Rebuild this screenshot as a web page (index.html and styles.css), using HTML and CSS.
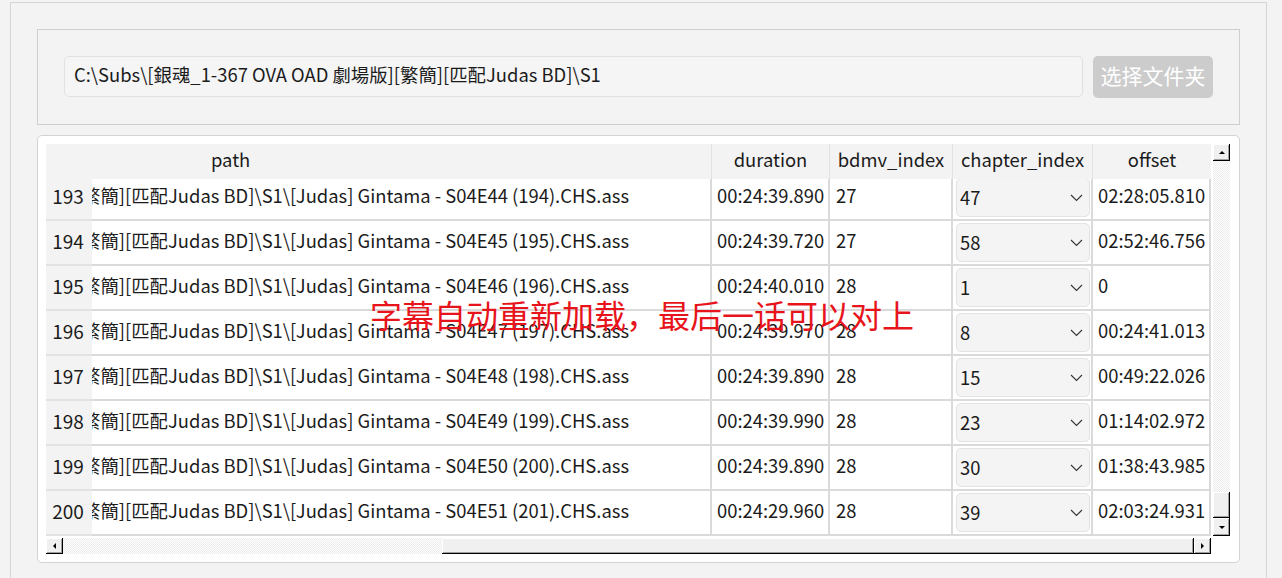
FILE: index.html
```html
<!DOCTYPE html>
<html lang="zh">
<head>
<meta charset="utf-8">
<title>Subs</title>
<link rel="stylesheet" href="styles.css">
</head>
<body>
<div class="window">
  <div class="group">
    <div class="lineedit">C:\Subs\[銀魂_1-367 OVA OAD 劇場版][繁簡][匹配Judas BD]\S1</div>
    <button class="btn">选择文件夹</button>
  </div>
  <div class="tableframe">
    <div class="view">
      <div class="header">
        <div class="hcell corner"></div>
        <div class="hcell w-path h-path">path</div>
        <div class="hcell w-dur">duration</div>
        <div class="hcell w-bdmv">bdmv_index</div>
        <div class="hcell w-chap">chapter_index</div>
        <div class="hcell w-off">offset</div>
      </div>
      <div class="body">
        <div class="rows">
          <div class="row"><div class="cell rn">193</div><div class="cell w-path path"><span>繁簡][匹配Judas BD]\S1\[Judas] Gintama - S04E44 (194).CHS.ass</span></div><div class="cell w-dur">00:24:39.890</div><div class="cell w-bdmv">27</div><div class="cell w-chap chap"><div class="combo"><span>47</span><svg class="chev" width="13" height="8" viewBox="0 0 13 8"><polyline points="1,1 6.5,6.5 12,1"/></svg></div></div><div class="cell w-off">02:28:05.810</div></div>
          <div class="row"><div class="cell rn">194</div><div class="cell w-path path"><span>繁簡][匹配Judas BD]\S1\[Judas] Gintama - S04E45 (195).CHS.ass</span></div><div class="cell w-dur">00:24:39.720</div><div class="cell w-bdmv">27</div><div class="cell w-chap chap"><div class="combo"><span>58</span><svg class="chev" width="13" height="8" viewBox="0 0 13 8"><polyline points="1,1 6.5,6.5 12,1"/></svg></div></div><div class="cell w-off">02:52:46.756</div></div>
          <div class="row"><div class="cell rn">195</div><div class="cell w-path path"><span>繁簡][匹配Judas BD]\S1\[Judas] Gintama - S04E46 (196).CHS.ass</span></div><div class="cell w-dur">00:24:40.010</div><div class="cell w-bdmv">28</div><div class="cell w-chap chap"><div class="combo"><span>1</span><svg class="chev" width="13" height="8" viewBox="0 0 13 8"><polyline points="1,1 6.5,6.5 12,1"/></svg></div></div><div class="cell w-off">0</div></div>
          <div class="row"><div class="cell rn">196</div><div class="cell w-path path"><span>繁簡][匹配Judas BD]\S1\[Judas] Gintama - S04E47 (197).CHS.ass</span></div><div class="cell w-dur">00:24:39.970</div><div class="cell w-bdmv">28</div><div class="cell w-chap chap"><div class="combo"><span>8</span><svg class="chev" width="13" height="8" viewBox="0 0 13 8"><polyline points="1,1 6.5,6.5 12,1"/></svg></div></div><div class="cell w-off">00:24:41.013</div></div>
          <div class="row"><div class="cell rn">197</div><div class="cell w-path path"><span>繁簡][匹配Judas BD]\S1\[Judas] Gintama - S04E48 (198).CHS.ass</span></div><div class="cell w-dur">00:24:39.890</div><div class="cell w-bdmv">28</div><div class="cell w-chap chap"><div class="combo"><span>15</span><svg class="chev" width="13" height="8" viewBox="0 0 13 8"><polyline points="1,1 6.5,6.5 12,1"/></svg></div></div><div class="cell w-off">00:49:22.026</div></div>
          <div class="row"><div class="cell rn">198</div><div class="cell w-path path"><span>繁簡][匹配Judas BD]\S1\[Judas] Gintama - S04E49 (199).CHS.ass</span></div><div class="cell w-dur">00:24:39.990</div><div class="cell w-bdmv">28</div><div class="cell w-chap chap"><div class="combo"><span>23</span><svg class="chev" width="13" height="8" viewBox="0 0 13 8"><polyline points="1,1 6.5,6.5 12,1"/></svg></div></div><div class="cell w-off">01:14:02.972</div></div>
          <div class="row"><div class="cell rn">199</div><div class="cell w-path path"><span>繁簡][匹配Judas BD]\S1\[Judas] Gintama - S04E50 (200).CHS.ass</span></div><div class="cell w-dur">00:24:39.890</div><div class="cell w-bdmv">28</div><div class="cell w-chap chap"><div class="combo"><span>30</span><svg class="chev" width="13" height="8" viewBox="0 0 13 8"><polyline points="1,1 6.5,6.5 12,1"/></svg></div></div><div class="cell w-off">01:38:43.985</div></div>
          <div class="row"><div class="cell rn">200</div><div class="cell w-path path"><span>繁簡][匹配Judas BD]\S1\[Judas] Gintama - S04E51 (201).CHS.ass</span></div><div class="cell w-dur">00:24:29.960</div><div class="cell w-bdmv">28</div><div class="cell w-chap chap"><div class="combo"><span>39</span><svg class="chev" width="13" height="8" viewBox="0 0 13 8"><polyline points="1,1 6.5,6.5 12,1"/></svg></div></div><div class="cell w-off">02:03:24.931</div></div>
        </div>
      </div>
      <div class="hscroll">
        <div class="sbtn hbtn"><i class="arr arr-left"></i></div>
        <div class="track htrack"></div>
        <div class="sbtn hthumb"></div>
        <div class="sbtn hbtn"><i class="arr arr-right"></i></div>
      </div>
    </div>
    <div class="vscroll">
      <div class="sbtn vbtn-up"><i class="arr arr-up"></i></div>
      <div class="track vtrack"></div>
      <div class="sbtn vthumb"></div>
      <div class="sbtn vbtn-down"><i class="arr arr-down"></i></div>
    </div>
    <div class="note">字幕自动重新加载，最后一话可以对上</div>
  </div>
</div>
</body>
</html>
```

FILE: styles.css
```css
html, body {
  margin: 0;
  height: 100%;
  overflow: hidden;
  background: #f3f3f3;
  font-family: "Noto Sans CJK SC", "Noto Sans", sans-serif;
  color: #1b1b1b;
}

.window {
  margin: 2px 0 0 10px;
  width: 1257px;
  height: 576px;
  box-sizing: border-box;
  border: 1px solid #d6d6d6;
  border-bottom: none;
  padding: 26px 26px 0 26px;
}

.group {
  height: 96px;
  box-sizing: border-box;
  border: 1px solid #cfcfcf;
  display: flex;
  align-items: flex-start;
  gap: 10px;
  padding: 26px 26px 0 26px;
}

.lineedit {
  flex: 1;
  height: 41px;
  box-sizing: border-box;
  border: 1px solid #e1e1e1;
  border-radius: 5px;
  background: #f5f5f5;
  font-size: 18.4px;
  line-height: 35px;
  padding-left: 9px;
  white-space: nowrap;
  overflow: hidden;
}

.btn {
  width: 120px;
  height: 42px;
  border: none;
  border-radius: 5px;
  background: #cccccc;
  color: #ffffff;
  font-family: "Noto Sans CJK SC", sans-serif;
  font-size: 21px;
  padding: 0 0 4px 0;
}

.tableframe {
  position: relative;
  margin-top: 10px;
  height: 428px;
  box-sizing: border-box;
  border: 1px solid #d3d3d3;
  border-radius: 5px;
  background: #ffffff;
  padding: 8px 8px 0 8px;
  display: flex;
  align-items: flex-start;
}

.view {
  width: 1165px;
  display: flex;
  flex-direction: column;
}

.header {
  display: flex;
  height: 35px;
  background: #f3f3f3;
}

.hcell {
  box-sizing: border-box;
  height: 35px;
  line-height: 30px;
  font-size: 18.4px;
  text-align: center;
  border-right: 1px solid #e2e2e2;
  white-space: nowrap;
}

.corner { width: 46px; border-right: none; }
.w-path { width: 620px; }
.w-dur { width: 118px; }
.w-bdmv { width: 123px; }
.w-chap { width: 140px; }
.w-off { width: 118px; }
.hcell.w-off { border-right: none; }

.h-path {
  text-align: left;
  padding-left: 119px;
}

.body {
  height: 357px;
  overflow: hidden;
}

.rows {
  margin-top: -3px;
}

.row {
  display: flex;
  height: 45px;
}

.cell {
  box-sizing: border-box;
  height: 45px;
  border-bottom: 2px solid #dadada;
  border-right: 2px solid #dadada;
  font-size: 18.4px;
  line-height: 39px;
  padding-left: 5px;
  white-space: nowrap;
  overflow: hidden;
}

.cell.rn {
  width: 46px;
  background: #f3f3f3;
  border-right: none;
  border-bottom-color: #e2e2e2;
  padding-left: 0;
  text-align: center;
  padding-right: 2px;
  font-size: 19px;
}

.cell.path {
  padding-left: 0;
}

.cell.path span {
  display: inline-block;
  margin-left: -10px;
}

.cell.w-bdmv { padding-left: 6px; }

.cell.chap {
  padding: 2px 1px 2px 3px;
}

.combo {
  box-sizing: border-box;
  height: 39px;
  border: 1px solid #e3e3e3;
  border-radius: 5px;
  background: #f4f4f4;
  display: flex;
  align-items: center;
  justify-content: space-between;
  padding: 0 6px 0 3px;
  line-height: 33px;
}

.chev {
  display: block;
  fill: none;
  stroke: #333333;
  stroke-width: 1.1;
}

.hscroll {
  margin-top: 2px;
  height: 16px;
  display: flex;
}

.sbtn {
  box-sizing: border-box;
  background: #f0f0f0;
  box-shadow: inset -1px -1px 0 #000000, inset 1px 1px 0 #ffffff, inset -2px -2px 0 #a0a0a0;
  display: flex;
  align-items: center;
  justify-content: center;
}

.hbtn { width: 17px; height: 16px; }
.htrack { width: 379px; height: 16px; }
.hthumb { width: 752px; height: 16px; }

.track {
  background-color: #ffffff;
  background-image: repeating-conic-gradient(#ffffff 0 25%, #ebebeb 0 50%);
  background-size: 2px 2px;
}

.vscroll {
  margin-left: 2px;
  width: 17px;
  height: 392px;
  display: flex;
  flex-direction: column;
}

.vbtn-up { height: 17px; }
.vtrack { height: 331px; }
.vthumb { height: 26px; }
.vbtn-down { height: 18px; }

.arr {
  display: block;
  width: 0;
  height: 0;
}

.arr-up {
  border-left: 3px solid transparent;
  border-right: 3px solid transparent;
  border-bottom: 3px solid #000;
  margin-top: -1px;
}

.arr-down {
  border-left: 3px solid transparent;
  border-right: 3px solid transparent;
  border-top: 3px solid #000;
}

.arr-left {
  border-top: 3px solid transparent;
  border-bottom: 3px solid transparent;
  border-right: 3px solid #000;
}

.arr-right {
  border-top: 3px solid transparent;
  border-bottom: 3px solid transparent;
  border-left: 3px solid #000;
}

.note {
  position: absolute;
  left: 332px;
  top: 162px;
  font-size: 32px;
  line-height: 32px;
  color: #e8141b;
  white-space: nowrap;
}
```
